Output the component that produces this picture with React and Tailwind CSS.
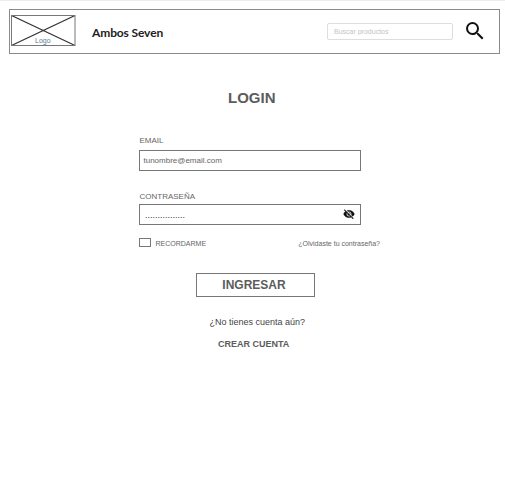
import React from 'react';

function Logo() {
  return (
    <div className="relative ml-px mt-[5px] h-[32px] w-[65px] shrink-0">
      <svg className="block" width="65" height="32" viewBox="0 0 65 32" fill="none">
        <path d="M.5 .5L64 30.5M.5 30.5L64 .5" stroke="#333" strokeWidth="1.2" />
        <rect x=".5" y=".5" width="63.5" height="30" stroke="#777" />
      </svg>
      <span className="absolute left-[24px] top-[21px] text-[7px] leading-[9px] text-[#5a7d98]">Logo</span>
    </div>
  );
}

function Header() {
  return (
    <header className="mx-[9px] mt-[8px] flex h-[45px] w-[491px] border border-[#8a8a8a]">
      <Logo />
      <div className="ml-[16px] mt-[15px] w-[235px] font-['Lato'] text-[12px] font-bold leading-[16px] tracking-[-0.12px] text-[#222]">
        Ambos Seven
      </div>
      <input
        type="text"
        placeholder="Buscar productos"
        className="mt-[13px] block h-[17px] w-[126px] shrink-0 rounded-[2px] border border-[#dedede] pl-[6px] text-[7px] leading-[15px] outline-none placeholder:text-[#c4c4c4] placeholder:opacity-100"
      />
      <svg className="ml-[10px] mt-[9px] shrink-0" width="24" height="24" viewBox="0 0 24 24" fill="#111">
        <path d="M15.5 14h-.79l-.28-.27A6.471 6.471 0 0 0 16 9.5 6.5 6.5 0 1 0 9.5 16c1.61 0 3.09-.59 4.23-1.57l.27.28v.79l5 4.99L20.49 19l-4.99-5zm-6 0C7.01 14 5 11.99 5 9.5S7.01 5 9.5 5 14 7.01 14 9.5 11.99 14 9.5 14z" />
      </svg>
    </header>
  );
}

function HiddenEye() {
  return (
    <svg className="mb-px" width="12" height="12" viewBox="0 0 24 24" fill="#111" stroke="#111" strokeWidth=".5">
      <path d="M12 7c2.76 0 5 2.24 5 5 0 .65-.13 1.26-.36 1.83l2.92 2.92c1.51-1.26 2.7-2.89 3.43-4.75-1.73-4.39-6-7.5-11-7.5-1.4 0-2.74.25-3.98.7l2.16 2.16C10.74 7.13 11.35 7 12 7zM2 4.27l2.28 2.28.46.46A11.804 11.804 0 0 0 1 12c1.73 4.39 6 7.5 11 7.5 1.55 0 3.03-.3 4.38-.84l.42.42L19.73 22 21 20.73 3.27 3 2 4.27zM7.53 9.8l1.55 1.55c-.05.21-.08.43-.08.65 0 1.66 1.34 3 3 3 .22 0 .44-.03.65-.08l1.55 1.55c-.67.33-1.41.53-2.2.53-2.76 0-5-2.24-5-5 0-.79.2-1.53.53-2.2zm4.31-.78l3.15 3.15.02-.16c0-1.66-1.34-3-3-3l-.17.01z" />
    </svg>
  );
}

export default function App() {
  return (
    <div className="h-[487px] w-[505px] overflow-hidden border-t border-[#ececec] bg-white font-['Liberation_Sans',Arial,sans-serif] text-[#666]">
      <Header />
      <main className="ml-[139px] flex w-[242px] flex-col">
        <h1 className="ml-[89px] mt-[34px] text-[15px] font-bold leading-[20px] text-[#5c5c5c]">LOGIN</h1>
        <label className="ml-[0.5px] mt-[28px] text-[8px] leading-[10px]">EMAIL</label>
        <div className="mt-[4px] flex h-[21px] w-[222px] items-center border border-[#777] pl-[3.5px] text-[8px] leading-[10px]">
          tunombre@email.com
        </div>
        <label className="ml-[0.5px] mt-[21px] text-[8px] leading-[10px]">CONTRASEÑA</label>
        <div className="mt-[2px] flex h-[21px] w-[222px] items-center justify-between border border-[#777] pl-[5px] pr-[5px]">
          <span className="pt-[1px] text-[9px] leading-[10px] text-[#333]">................</span>
          <HiddenEye />
        </div>
        <div className="mt-[13px] flex h-[9px] items-center">
          <span className="h-[9px] w-[12px] border border-[#777]" />
          <span className="ml-[4.5px] mt-[2px] text-[7px] leading-[9px]">RECORDARME</span>
          <span className="ml-auto mr-[1px] mt-[2px] text-[7px] leading-[9px]">¿Olvidaste tu contraseña?</span>
        </div>
        <button className="ml-[57px] mt-[26px] flex h-[24px] w-[119px] items-center justify-center border border-[#777] pr-[3px] text-[12px] font-bold leading-[16px] text-[#5c5c5c]">
          INGRESAR
        </button>
        <p className="ml-[70.5px] mt-[19px] text-[9px] leading-[12px] text-[#444]">¿No tienes cuenta aún?</p>
        <a className="ml-[79px] mt-[10px] text-[9px] font-bold leading-[12px] text-[#5c5c5c]">CREAR CUENTA</a>
      </main>
    </div>
  );
}
